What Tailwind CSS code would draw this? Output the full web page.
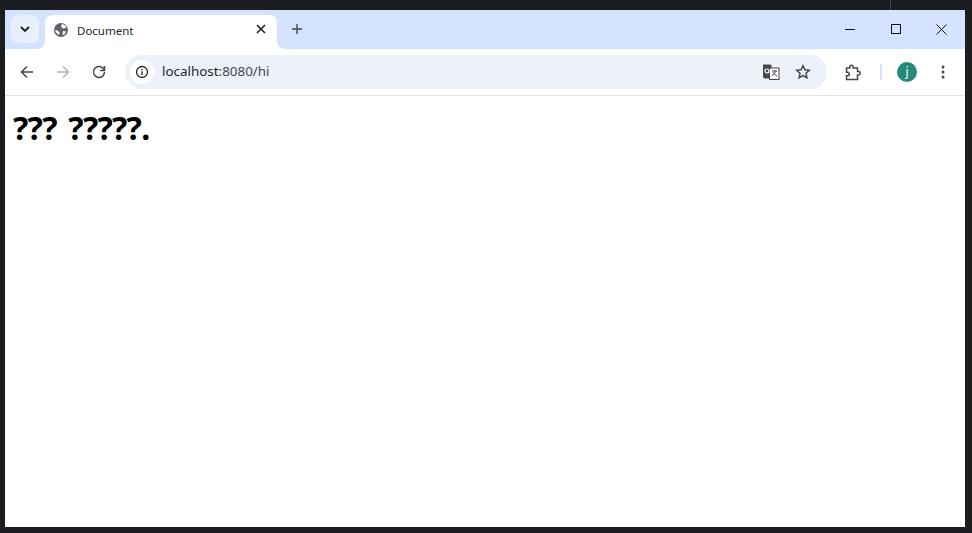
<!DOCTYPE html>
<html lang="en">
  <head>
    <meta charset="UTF-8" />
    <title>Document</title>
    <script src="https://cdn.jsdelivr.net/npm/@tailwindcss/browser@4"></script>
  </head>
  <body class="bg-[#1c1d21] h-[533px] w-[972px] overflow-hidden font-['Noto_Sans','Open_Sans',sans-serif]">
    <!-- desktop behind the window -->
    <div class="absolute left-[890px] top-0 h-[10px] w-px bg-[#44464b]"></div>

    <div class="ml-[5px] mt-[10px] flex h-[517px] w-[960px] flex-col bg-white relative">
      <!-- tab strip -->
      <div class="flex h-[39px] items-start bg-[#d3e3fd]">
        <div class="ml-[6px] mt-[5px] flex h-7 w-7 items-center justify-center rounded-lg bg-[#e9f0fd]">
          <svg width="12" height="12" viewBox="0 0 12 12" fill="none" stroke="#1f1f1f" stroke-width="1.8"><path d="M2 4l4 4 4-4" /></svg>
        </div>
        <div class="relative z-10 ml-[6px] mt-[5px] flex h-[34px] w-[232px] items-center rounded-t-lg bg-white pl-[9px] pb-[4px]">
          <div class="absolute -left-2 bottom-0 h-2 w-2 bg-white"><div class="h-2 w-2 rounded-br-lg bg-[#d3e3fd]"></div></div>
          <div class="absolute -right-2 bottom-0 h-2 w-2 bg-white"><div class="h-2 w-2 rounded-bl-lg bg-[#d3e3fd]"></div></div>
          <svg width="14" height="14" viewBox="0 0 14 14"><circle cx="7" cy="7" r="7" fill="#5f6368" /><path d="M1.500 6.500l2.500 1.500 1.500 1.500-.5 2.500-1.500-1-2-2.500zM8.500 1l3 1.500 1 2-2.500 1-2-.5-1-2.500zM9 8l3 .5-1.500 3-2 .5z" fill="#fff" /></svg>
          <span class="ml-[9px] mt-[2px] text-[11.5px] leading-none text-[#1f1f1f]">Document</span>
          <svg class="absolute left-[211px] top-[9px]" width="10" height="10" viewBox="0 0 10 10" stroke="#1f1f1f" stroke-width="1.6"><path d="M1 1l8 8M9 1l-8 8" /></svg>
        </div>
        <svg class="ml-[15px] mt-[14px]" width="10" height="10" viewBox="0 0 10 10" stroke="#474747" stroke-width="1.4"><path d="M5 0v10M0 5h10" /></svg>
        <div class="ml-auto flex items-start">
          <svg class="mt-[19px]" width="10" height="1" viewBox="0 0 10 1"><rect width="10" height="1" fill="#111" /></svg>
          <svg class="ml-[36px] mt-[14px]" width="10" height="10" viewBox="0 0 10 10" fill="none" stroke="#111"><rect x=".5" y=".5" width="9" height="9" /></svg>
          <svg class="ml-[35px] mr-[18px] mt-[14px]" width="11" height="11" viewBox="0 0 11 11" stroke="#111"><path d="M.5.5l10 10M10.500.5l-10 10" /></svg>
        </div>
      </div>

      <!-- toolbar -->
      <div class="flex h-[47px] items-center rounded-t-lg border-b border-[#e3e3e3] bg-white">
        <svg class="ml-[15px]" width="14" height="14" viewBox="0 0 14 14" fill="none" stroke="#474747" stroke-width="1.500"><path d="M13 7H2M7 1.500L1.500 7 7 12.500" /></svg>
        <svg class="ml-[22px]" width="14" height="14" viewBox="0 0 14 14" fill="none" stroke="#b0b2b5" stroke-width="1.500"><path d="M1 7h11M7 1.500L12.500 7 7 12.500" /></svg>
        <svg class="ml-[22px]" width="14" height="14" viewBox="0 0 14 14" fill="none" stroke="#474747" stroke-width="1.500"><path d="M12.500 7a5.500 5.500 0 1 1-1.600-3.900L12.500 5M12.500 1v4.500H8" /></svg>
        <div class="ml-[19px] flex h-[34px] w-[702px] items-center rounded-full bg-[#edf2fa] pl-[5px]">
          <div class="flex h-6 w-6 items-center justify-center rounded-full bg-white">
            <svg width="14" height="14" viewBox="0 0 14 14" fill="none" stroke="#1f1f1f" stroke-width="1.300"><circle cx="7" cy="7" r="5.500" /><path d="M7 6.200V10M7 4v1.300" /></svg>
          </div>
          <span class="ml-[8px] text-[13.400px] leading-none text-[#1f1f1f]">localhost<span class="text-[#474747]">:8080/hi</span></span>
          <svg class="ml-auto" width="18" height="18" viewBox="0 0 18 18"><path d="M1 1.500h8l1 3h-1l2 11H3a2 2 0 0 1-2-2z" fill="#474747" /><rect x="7.500" y="5" width="9.500" height="11.500" fill="#fff" stroke="#474747" /><path d="M10 8h5M12.500 7v1M14 8c-.5 2-2 3.500-4 4.500M11 9c.6 1.500 2 3 4 4" stroke="#474747" fill="none" /><circle cx="5" cy="8" r="2" fill="none" stroke="#fff" stroke-width="1.200" /></svg>
          <svg class="ml-[15px] mr-[16px]" width="16" height="16" viewBox="0 0 16 16" fill="none" stroke="#474747" stroke-width="1.500"><path d="M8 1.800l1.900 4 4.400.5-3.300 3 .9 4.400L8 11.500l-3.900 2.200.9-4.400-3.300-3 4.400-.5z" /></svg>
        </div>
        <svg class="ml-[18px]" width="17" height="17" viewBox="0 0 17 17" fill="none" stroke="#474747" stroke-width="1.500"><path d="M1.500 4h3.300V3a1.700 1.700 0 0 1 3.400 0v1h4.300v3.500h1a1.700 1.700 0 0 1 0 3.400h-1v4.600H1.500v-3.700h1a1.800 1.800 0 0 0 0-3.600h-1z" /></svg>
        <div class="ml-[18px] h-4 w-[2px] bg-[#d3e3fd]"></div>
        <div class="ml-[15px] flex h-5 w-5 items-center justify-center rounded-full bg-[#26897a] text-[12px] leading-none text-white">j</div>
        <svg class="ml-[24px]" width="4" height="14" viewBox="0 0 4 14" fill="#474747"><circle cx="2" cy="2" r="1.500" /><circle cx="2" cy="7" r="1.500" /><circle cx="2" cy="12" r="1.500" /></svg>
      </div>

      <!-- page content -->
      <h1 class="ml-2 mt-[12px] text-[32px] font-bold leading-[40px] tracking-[-0.7px] [word-spacing:4px] text-black">??? ?????.</h1>
    </div>
  </body>
</html>
